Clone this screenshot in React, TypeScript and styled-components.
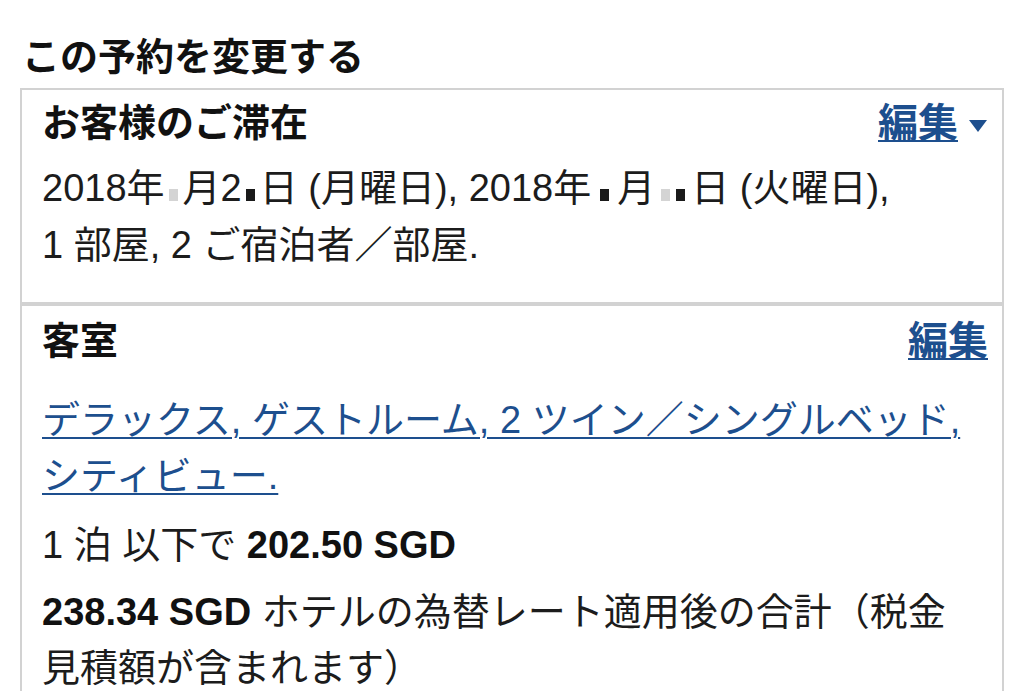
import React from 'react';
import styled, { createGlobalStyle } from 'styled-components';

const GlobalStyle = createGlobalStyle`
  body {
    margin: 0;
    background: #fff;
    font-family: "Liberation Sans", "Noto Sans CJK JP", sans-serif;
    color: #1c1c1c;
  }
`;

const Page = styled.div`
  padding: 33px 20px 0 20px;
  width: 984px;
`;

const PageTitle = styled.h1`
  margin: 0 0 7px 2px;
  font-size: 38px;
  line-height: 48px;
  font-weight: bold;
  color: #111;
`;

const Box = styled.div`
  border: 2px solid #d2d2d2;
  border-bottom: none;
`;

const Section = styled.div<{ $top: number; $bottom: number; $divider?: boolean }>`
  padding: ${(p) => p.$top}px 14px ${(p) => p.$bottom}px 20px;
  border-top: ${(p) => (p.$divider ? '4px solid #d2d2d2' : 'none')};
`;

const HeaderRow = styled.div`
  display: flex;
  justify-content: space-between;
  align-items: center;
  height: 50px;
`;

const SectionTitle = styled.h2`
  margin: 0;
  font-size: 38px;
  line-height: 50px;
  font-weight: bold;
  color: #111;
`;

const EditLink = styled.a`
  font-size: 40px;
  line-height: 50px;
  font-weight: bold;
  color: #1d4f8e;
  text-decoration: underline;
  text-decoration-thickness: 2px;
  text-underline-offset: 3px;
  cursor: pointer;
  display: inline-flex;
  align-items: center;
  gap: 10px;
`;

const Caret = styled.svg`
  width: 20px;
  height: 14px;
  margin-top: 6px;
`;

const Text = styled.p<{ $gap: number; $lh?: number }>`
  margin: ${(p) => p.$gap}px 26px 0 0;
  font-size: 38px;
  line-height: ${(p) => p.$lh ?? 57}px;
  color: #1c1c1c;
`;

const RoomLink = styled.a`
  color: #1d4f8e;
  text-decoration: underline;
  text-decoration-thickness: 2px;
  text-underline-offset: 4px;
  cursor: pointer;
`;

/* blurred-out digits in the dates */
const Redacted = styled.span<{ $w: number }>`
  display: inline-flex;
  justify-content: space-evenly;
  align-items: center;
  width: ${(p) => p.$w}px;
  height: 22px;
  vertical-align: baseline;
`;

const Chip = styled.span<{ $dark?: boolean }>`
  display: inline-block;
  width: 9px;
  height: 12px;
  background: ${(p) => (p.$dark ? '#1a1a1a' : '#d4d4d4')};
`;

const Strong = styled.b`
  font-weight: bold;
  color: #111;
`;

export default function App() {
  return (
    <>
      <GlobalStyle />
      <Page>
        <PageTitle>この予約を変更する</PageTitle>
        <Box>
          <Section $top={8} $bottom={28}>
            <HeaderRow>
              <SectionTitle>お客様のご滞在</SectionTitle>
              <EditLink>
                編集
                <Caret viewBox="0 0 20 14">
                  <polygon points="1,1 19,1 10,13" fill="#1d4f8e" />
                </Caret>
              </EditLink>
            </HeaderRow>
            <Text $gap={12}>
              2018年
              <Redacted $w={18}>
                <Chip />
              </Redacted>
              月2
              <Redacted $w={18}>
                <Chip $dark />
              </Redacted>
              日 (月曜日), 2018年
              <Redacted $w={26}>
                <Chip $dark />
              </Redacted>
              月
              <Redacted $w={36}>
                <Chip />
                <Chip $dark />
              </Redacted>
              日 (火曜日),
              <br />1 部屋, 2 ご宿泊者／部屋.
            </Text>
          </Section>
          <Section $top={10} $bottom={30} $divider>
            <HeaderRow>
              <SectionTitle>客室</SectionTitle>
              <EditLink>編集</EditLink>
            </HeaderRow>
            <Text $gap={26} $lh={56}>
              <RoomLink>デラックス, ゲストルーム, 2 ツイン／シングルベッド, シティビュー.</RoomLink>
            </Text>
            <Text $gap={13} $lh={56}>
              1 泊 以下で <Strong>202.50 SGD</Strong>
            </Text>
            <Text $gap={11} $lh={56}>
              <Strong>238.34 SGD</Strong> ホテルの為替レート適用後の合計（税金見積額が含まれます）
            </Text>
          </Section>
        </Box>
      </Page>
    </>
  );
}
